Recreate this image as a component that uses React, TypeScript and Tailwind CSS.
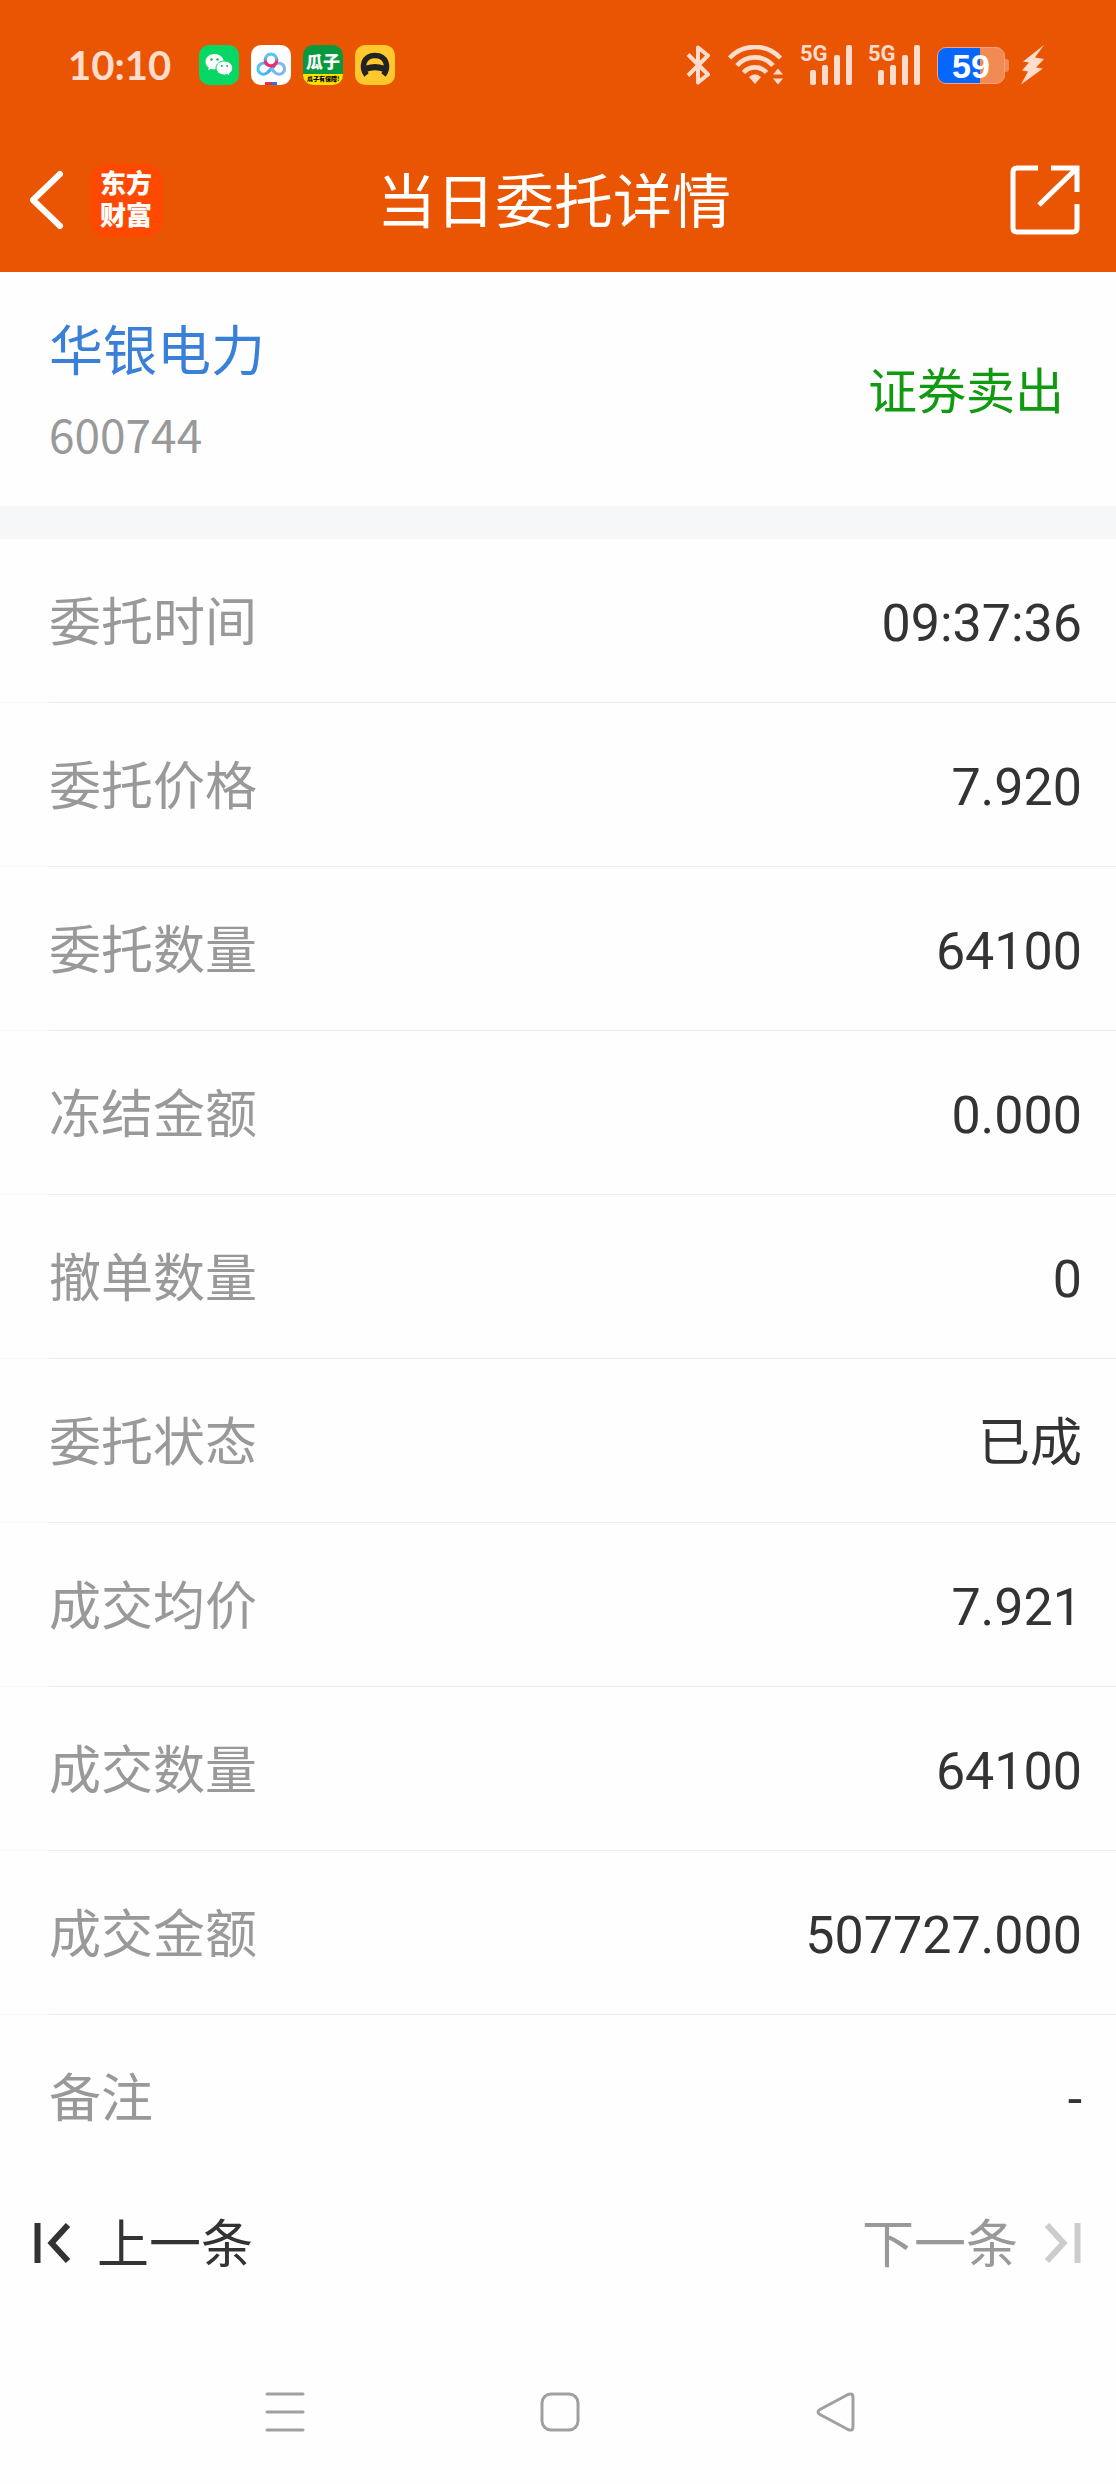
import { useState } from "react";

const rows = [
  { label: "委托时间", value: "09:37:36" },
  { label: "委托价格", value: "7.920" },
  { label: "委托数量", value: "64100" },
  { label: "冻结金额", value: "0.000" },
  { label: "撤单数量", value: "0" },
  { label: "委托状态", value: "已成" },
  { label: "成交均价", value: "7.921" },
  { label: "成交数量", value: "64100" },
  { label: "成交金额", value: "507727.000" },
  { label: "备注", value: "-" },
];

export default function App() {
  return (
    <div className="flex min-h-screen flex-col bg-[#fefefe] font-['Roboto','Noto_Sans_CJK_SC',sans-serif] text-[#333]">
      <header className="bg-[#ea5504] text-white">
        <StatusBar />
        <TitleBar />
      </header>

      <main>
        <section className="flex h-[234px] items-center justify-between pl-[49px] pr-[52px] pt-2">
          <div>
            <h2 className="text-[54px] leading-[80px] text-[#3a80d8]">
              华银电力
            </h2>
            <p className="font-['Noto_Sans_CJK_SC',sans-serif] text-[46px] leading-[80px] text-[#999]">
              600744
            </p>
          </div>
          <p className="text-[49px] leading-[72px] text-[#0f9a0f]">证券卖出</p>
        </section>

        <dl className="border-t-[33px] border-[#f6f7f9]">
          {rows.map((row) => (
            <div
              key={row.label}
              className="relative flex h-41 items-center justify-between border-b border-[#f7f7f7] pl-[49px] pr-[34px] pt-1.5 text-[52px] leading-[76px] after:absolute after:-bottom-px after:left-[49px] after:right-0 after:h-px after:bg-[#ebebeb] last:border-transparent last:after:hidden"
            >
              <dt className="text-[#999]">{row.label}</dt>
              <dd>{row.value}</dd>
            </div>
          ))}
        </dl>

        <Pager />
      </main>

      <SystemNav />
    </div>
  );
}

function StatusBar() {
  return (
    <div className="flex h-32 items-center justify-between pl-[68px] pr-[71px] pt-0.5 text-[#ffdccb]">
      <div className="flex items-center gap-3">
        <span className="mr-4 font-['Lato',sans-serif] text-[40px] font-bold leading-[48px]">
          10:10
        </span>
        <WechatIcon />
        <CloudDiskIcon />
        <div className="flex size-10 flex-col overflow-hidden rounded-[10px] bg-[#079840] text-center font-['Noto_Sans_CJK_SC',sans-serif] font-black">
          <span className="h-[29px] text-[17px] leading-[31px] text-white">
            瓜子
          </span>
          <span className="flex-1 whitespace-nowrap bg-[#ffe100] text-[6px] leading-[10px] text-black">
            瓜子有保障!
          </span>
        </div>
        <CarIcon />
      </div>

      <div className="flex items-center">
        <svg
          className="h-10 w-6"
          viewBox="0 0 24 40"
          fill="none"
          stroke="currentColor"
          strokeWidth="4"
          strokeLinejoin="round"
        >
          <path d="M2 9.500 22 29.500 12 37.500V2.500L22 10.500 2 30.500" />
        </svg>
        <svg
          className="ml-[18px] h-10 w-14"
          viewBox="0 0 56 40"
          fill="none"
          stroke="currentColor"
          strokeWidth="4.600"
        >
          <path d="M1.500 13A35 35 0 0 1 52.500 13M9 20.500A24 24 0 0 1 45 20.500M15.500 27.500A15.500 15.500 0 0 1 38.500 27.500" />
          <path
            d="M27 39 21 32Q27 26.500 33 32ZM45 29.500 50 23.500 55 29.500ZM45 33.500H55L50 39.500Z"
            fill="currentColor"
            stroke="none"
          />
        </svg>
        <Signal />
        <Signal />
        <Battery />
        <svg className="ml-3 h-10 w-6" viewBox="0 0 24 40" fill="currentColor">
          <path d="M23 0 2 16.500 8 17.500 1 25.500 7 26.500 0 39.500 22 23.500 15 22.500 23 14 14 12.500Z" />
        </svg>
      </div>
    </div>
  );
}

function Signal() {
  return (
    <div className="relative ml-4 h-10 w-[52px]">
      <span className="absolute left-0 top-0 font-['Liberation_Sans_Narrow','Roboto',sans-serif] text-[22px] font-bold leading-[18px]">
        5G
      </span>
      <div className="flex h-full items-end justify-end gap-[6px]">
        <i className="h-[15px] w-[6px] rounded-[2px] bg-current" />
        <i className="h-5 w-[6px] rounded-[2px] bg-current" />
        <i className="h-[30px] w-[6px] rounded-[2px] bg-current" />
        <i className="h-10 w-[6px] rounded-[2px] bg-current" />
      </div>
    </div>
  );
}

function Battery() {
  return (
    <div className="ml-[17px] flex items-center">
      <div className="relative h-[37px] w-[68px] overflow-hidden rounded-[9px] border border-[#f6a27a] bg-[#f28a53] text-center font-['Liberation_Sans',sans-serif] text-[34px] font-bold leading-9 text-white">
        <div className="absolute inset-y-0 left-0 w-[42px] bg-[#0667ff]" />
        <span className="relative">59</span>
      </div>
      <div className="h-[13px] w-1 rounded-r-[3px] bg-[#f28a53]" />
    </div>
  );
}

function TitleBar() {
  return (
    <div className="grid h-36 grid-cols-[1fr_auto_1fr] items-center pl-7 pr-9">
      <div className="flex items-center gap-[26px]">
        <button aria-label="返回">
          <svg
            className="h-[60px] w-9"
            viewBox="0 0 36 60"
            fill="none"
            stroke="currentColor"
            strokeWidth="6"
            strokeLinecap="round"
            strokeLinejoin="round"
          >
            <path d="M32 4 5 30 32 56" />
          </svg>
        </button>
        <div className="flex size-[73px] items-center rounded-[18px] bg-[#ff4800] px-[10px] pb-1 font-['Noto_Sans_CJK_SC',sans-serif] text-[26px] font-black leading-8">
          <p>东方财富</p>
        </div>
      </div>
      <h1 className="pt-1.5 text-[59px] leading-[84px]">当日委托详情</h1>
      <button aria-label="分享" className="justify-self-end">
        <svg
          className="size-[70px]"
          viewBox="0 0 70 70"
          fill="none"
          stroke="currentColor"
          strokeWidth="5"
        >
          <path d="M28 3H7Q3 3 3 7V63Q3 67 7 67H63Q67 67 67 63V39" />
          <path d="M41 3H67V27M67 3 29 40" />
        </svg>
      </button>
    </div>
  );
}

function Pager() {
  let [index, setIndex] = useState(1);
  const isLast = index === 1;

  return (
    <nav className="flex h-32 items-center justify-between pl-[34px] pr-[35px] text-[52px] leading-[76px]">
      <button
        onClick={() => setIndex(Math.max(index - 1, 0))}
        className="flex items-center gap-[26px]"
      >
        <svg
          className="h-10 w-[37px]"
          viewBox="0 0 37 40"
          fill="none"
          stroke="currentColor"
          strokeWidth="6"
        >
          <path d="M3.500 0V40M34 2 17.500 20 34 38" />
        </svg>
        <span className="pt-1.5">上一条</span>
      </button>
      <button
        disabled={isLast}
        onClick={() => setIndex(index + 1)}
        className="flex items-center gap-[26px] disabled:text-[#999]"
      >
        <span className="pt-1.5">下一条</span>
        <svg
          className="h-10 w-[37px] text-[#ccc]"
          viewBox="0 0 37 40"
          fill="none"
          stroke="currentColor"
          strokeWidth="6"
        >
          <path d="M33.500 0V40M3 2 19.500 20 3 38" />
        </svg>
      </button>
    </nav>
  );
}

function SystemNav() {
  return (
    <nav className="mt-auto flex h-36 items-center justify-around pl-[147px] pr-[142px] text-[#a0a0a0]">
      <button aria-label="最近任务">
        <svg
          className="size-10"
          viewBox="0 0 40 40"
          stroke="currentColor"
          strokeWidth="3"
          strokeLinecap="round"
        >
          <path d="M2 2H38M2 20H38M2 38H38" />
        </svg>
      </button>
      <button aria-label="主屏幕">
        <svg
          className="size-10"
          viewBox="0 0 40 40"
          fill="none"
          stroke="currentColor"
          strokeWidth="3"
        >
          <rect x="2" y="2" width="36" height="36" rx="9" />
        </svg>
      </button>
      <button aria-label="后退">
        <svg
          className="size-10"
          viewBox="0 0 40 40"
          fill="none"
          stroke="currentColor"
          strokeWidth="3"
        >
          <path d="M32 2.500 4 17.500Q0 20 4 22.500L32 37.500Q37 39.500 37 35V5Q37 .5 32 2.500Z" />
        </svg>
      </button>
    </nav>
  );
}

function WechatIcon() {
  return (
    <svg className="size-10" viewBox="0 0 40 40">
      <rect width="40" height="40" rx="10" fill="#07d765" />
      <path
        d="M15.500 9C10.500 9 6.500 12.400 6.500 16.700c0 2.400 1.300 4.500 3.300 5.900l-.8 2.600 3-1.500c1.100.4 2.300.6 3.500.6 5 0 9.300-3.300 9.300-7.600S20.500 9 15.500 9Z"
        fill="#fff"
      />
      <path
        d="M25.500 16c-4.700 0-8.500 3.100-8.500 7s3.800 7 8.500 7c1 0 2-.1 2.900-.4l2.700 1.400-.7-2.300c2-1.300 3.300-3.300 3.300-5.700 0-3.900-3.700-7-8.200-7Z"
        fill="#fff"
        stroke="#07d765"
        strokeWidth="1"
      />
      <g fill="#07b555">
        <circle cx="12.500" cy="14.500" r="1.200" />
        <circle cx="18.500" cy="14.500" r="1.200" />
        <circle cx="22.800" cy="21" r="1" />
        <circle cx="28.200" cy="21" r="1" />
      </g>
    </svg>
  );
}

function CloudDiskIcon() {
  return (
    <svg className="size-10" viewBox="0 0 40 40" fill="none">
      <defs>
        <linearGradient id="ring" x1="0" x2="0" y1="0" y2="1">
          <stop offset="0.3" stopColor="#5cc3f2" />
          <stop offset="0.7" stopColor="#f0286e" />
        </linearGradient>
        <linearGradient id="loop">
          <stop offset="0" stopColor="#4fc8ef" />
          <stop offset="1" stopColor="#4d93ee" />
        </linearGradient>
      </defs>
      <rect width="40" height="40" rx="10" fill="#fff" />
      <g strokeWidth="3.200">
        <path
          d="M24 20 16.500 27.500A5.500 5.500 0 1 1 16 19.500"
          stroke="url(#loop)"
        />
        <path
          d="M20 23.500 24 27.500A5.500 5.500 0 1 0 24.500 19.500"
          stroke="#78b9f2"
        />
        <circle cx="20" cy="15" r="5.800" stroke="url(#ring)" />
      </g>
      <path d="M14 37H20V40H14Z" fill="#ee2b3b" />
      <path d="M20 37H26V40H20Z" fill="#2d6fe0" />
    </svg>
  );
}

function CarIcon() {
  return (
    <svg className="size-10" viewBox="0 0 40 40" fill="none">
      <rect width="40" height="40" rx="10" fill="#ffc92e" />
      <path
        d="M11.500 30C5.500 22 8.500 10.500 20 10.500S34.500 22 28.500 30"
        stroke="#222"
        strokeWidth="5.500"
      />
      <path d="M11 20.500Q20 17.500 29 20.500V27Q20 23.500 11 27Z" fill="#222" />
    </svg>
  );
}
